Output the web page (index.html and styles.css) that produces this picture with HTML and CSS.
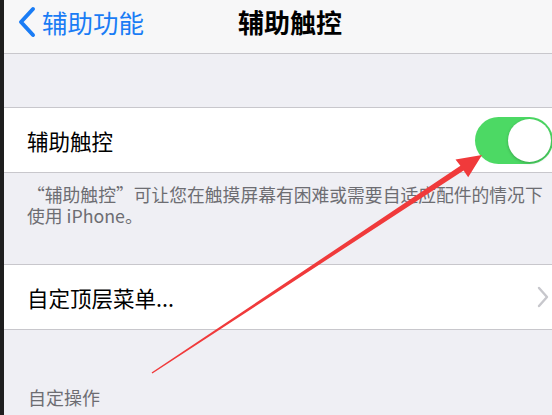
FILE: index.html
```html
<!DOCTYPE html>
<html lang="zh-CN">
<head>
  <meta charset="UTF-8">
  <title>辅助触控</title>
  <link rel="stylesheet" href="styles.css">
</head>
<body>
  <div class="screen">
    <div class="nav">
      <div class="back">
        <svg class="back-icon" width="22" height="32" viewBox="0 0 22 32"><path d="M18 3 L6 16 L18 29" fill="none" stroke="#1a7cf5" stroke-width="4" stroke-linecap="round" stroke-linejoin="round"/></svg>
        <span>辅助功能</span>
      </div>
      <div class="title">辅助触控</div>
    </div>

    <div class="gap"></div>

    <div class="group">
      <div class="row">
        <span class="label">辅助触控</span>
        <div class="switch on"><div class="knob"></div></div>
      </div>
    </div>
    <div class="footer">“辅助触控”可让您在触摸屏幕有困难或需要自适应配件的情况下使用 iPhone。</div>

    <div class="group">
      <div class="row">
        <span class="label">自定顶层菜单...</span>
        <svg class="chevron" width="14" height="22" viewBox="0 0 14 22"><path d="M3 2 L11 11 L3 20" fill="none" stroke="#c7c7cc" stroke-width="2.4" stroke-linecap="round" stroke-linejoin="round"/></svg>
      </div>
    </div>
    <div class="section-head">自定操作</div>

    <!-- red annotation arrow drawn over the screenshot -->
    <svg class="arrow" width="552" height="415" viewBox="0 0 552 415">
      <polygon fill="#f03a3b" points="151.6,372.6 460.4,165.8 455.5,159.6 482,155 468.2,177.2 463.6,170.6 152.4,373.4"/>
    </svg>
  </div>
</body>
</html>
```

FILE: styles.css
```css
body {
  margin: 0;
  background-color: #1e1e1e;
  font-family: "Noto Sans CJK SC", "Noto Sans", sans-serif;
  overflow: hidden;
}

.screen {
  position: relative;
  margin-left: 4px;
  height: 415px;
  background-color: #efeff4;
  overflow: hidden;
}

/* top bar */
.nav {
  height: 54px;
  box-sizing: border-box;
  background-color: #f7f7f8;
  border-bottom: 1px solid #c8c7cc;
  display: flex;
  align-items: flex-start;
  padding-top: 6px;
  position: relative;
}
.back {
  display: flex;
  align-items: center;
  gap: 5px;
  padding-left: 11px;
  color: #1a7cf5;
  font-size: 25.5px;
  line-height: 32px;
}
.back-icon { display: block; }
.title {
  position: absolute;
  left: 0;
  right: 0;
  top: 6px;
  text-align: center;
  font-size: 26px;
  line-height: 32px;
  font-weight: 700;
  color: #000;
  padding-left: 24px;
  pointer-events: none;
}

.gap { height: 53px; }

/* table rows */
.group {
  background-color: #fff;
  border-top: 1px solid #c8c7cc;
  border-bottom: 1px solid #c8c7cc;
}
.row {
  height: 64px;
  display: flex;
  align-items: center;
  justify-content: space-between;
  padding-left: 23px;
  padding-right: 2px;
}
.label {
  font-size: 21.5px;
  color: #000;
  line-height: 28px;
  margin-top: 2px;
}

.switch {
  width: 78px;
  height: 47px;
  border-radius: 24px;
  background-color: #4cd964;
  display: flex;
  align-items: center;
  justify-content: flex-end;
  padding: 2px;
  box-sizing: border-box;
  margin-right: -3px;
}
.knob {
  width: 43px;
  height: 43px;
  border-radius: 50%;
  background-color: #fff;
  box-shadow: 0 1px 3px rgba(0, 0, 0, 0.25);
}

.footer {
  padding: 11px 6px 38px 23px;
  font-size: 17.8px;
  line-height: 21px;
  color: #6d6d72;
}

.section-head {
  padding: 55px 24px 0;
  font-size: 18px;
  line-height: 24px;
  color: #6d6d72;
}

.arrow {
  position: absolute;
  top: 0;
  left: -4px;
  pointer-events: none;
}
```
